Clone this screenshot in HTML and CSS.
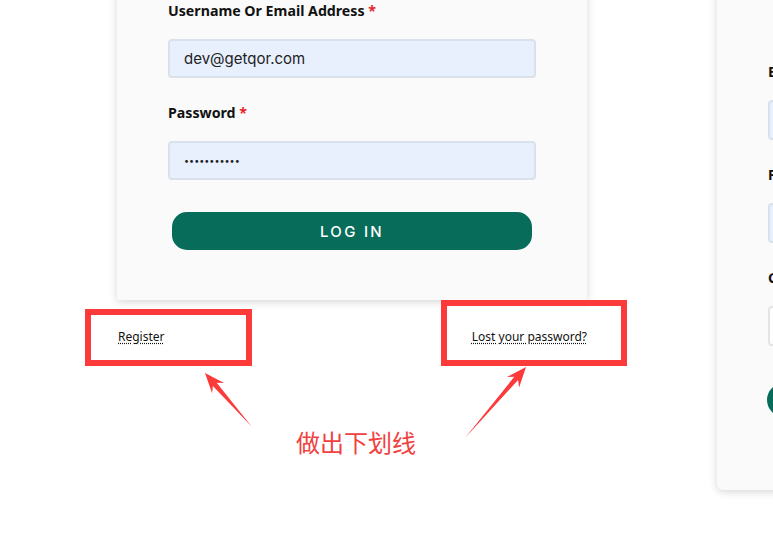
FILE: index.html
```html
<!DOCTYPE html>
<html lang="zh-CN">
<head>
  <meta charset="UTF-8">
  <title>Log In</title>
  <link rel="stylesheet" href="styles.css">
</head>
<body>
  <div class="page">
    <div class="login-col">
      <div class="card login-card">
        <form class="auth-form">
          <div class="form-row">
            <label class="field-label" for="username">Username Or Email Address <span class="req">*</span></label>
            <input class="field" type="text" id="username" value="dev@getqor.com">
          </div>
          <div class="form-row">
            <label class="field-label" for="password">Password <span class="req">*</span></label>
            <input class="field" type="password" id="password" value="12345678901">
          </div>
          <button type="button" class="btn">Log In</button>
        </form>
      </div>
      <div class="links">
        <a href="#">Register</a>
        <a href="#">Lost your password?</a>
      </div>
    </div>

    <div class="card reg-card">
      <form class="auth-form">
        <div class="form-row">
          <label class="field-label" for="regEmail">Email Address <span class="req">*</span></label>
          <input class="field" type="text" id="regEmail">
        </div>
        <div class="form-row">
          <label class="field-label" for="regPass">Password <span class="req">*</span></label>
          <input class="field" type="password" id="regPass">
        </div>
        <div class="form-row">
          <label class="field-label" for="regConfirm">Confirm Password <span class="req">*</span></label>
          <input class="field plain" type="password" id="regConfirm">
        </div>
        <button type="button" class="btn">Register</button>
      </form>
    </div>
  </div>

  <!-- annotation layer -->
  <svg class="notes" width="773" height="540" viewBox="0 0 773 540">
    <rect x="88" y="312" width="161" height="51" fill="none" stroke="#fc3a3a" stroke-width="6"/>
    <rect x="444" y="303" width="180" height="60" fill="none" stroke="#fc3a3a" stroke-width="6"/>
    <polygon fill="#fc3a3a" points="252,427 216.7,382.7 224.1,382.9 205,373 212.1,393.3 212.9,385.9"/>
    <polygon fill="#fc3a3a" points="465,438 518.1,380 519.1,387.4 526,367 506.9,377 514.3,376.8"/>
    <text x="296" y="452" class="note-text">做出下划线</text>
  </svg>
</body>
</html>
```

FILE: styles.css
```css
html, body { margin: 0; overflow: hidden; }
body {
  background: #fff;
  font-family: "Noto Sans", "Open Sans", sans-serif;
  color: #111;
  position: relative;
  width: 773px;
  height: 540px;
}
.page {
  display: flex;
  align-items: flex-start;
  gap: 130px;
  padding-left: 117px;
  margin-top: -40px;
}
.login-col { width: 470px; flex-shrink: 0; }
.card {
  background: #fafafa;
  box-shadow: 0 2px 9px rgba(0, 0, 0, 0.16);
  border-radius: 2px;
  box-sizing: border-box;
}
.login-card { padding: 40px 51px 50px 51px; }
.reg-card {
  width: 470px;
  flex-shrink: 0;
  padding: 101px 51px 73px 51px;
  border-radius: 6px;
}
.form-row { margin-bottom: 24px; }
.field-label {
  display: block;
  font-weight: 700;
  font-size: 14.2px;
  line-height: 22px;
  margin-bottom: 17px;
  color: #111;
}
.req { color: #e5262b; }
.field {
  display: block;
  width: 100%;
  box-sizing: border-box;
  height: 39px;
  padding: 0 14px;
  border: 2px solid #dbe1ea;
  border-radius: 4px;
  background: #e8f0fe;
  font-family: Inter, "Noto Sans", sans-serif;
  font-size: 15px;
  color: #222;
  outline: none;
}
.reg-card .field { height: 40px; }
.field.plain { background: #fff; border-color: #e4e4e4; }
.field[type="password"] { font-size: 9px; letter-spacing: 0; }
.form-row:last-of-type { margin-bottom: 32px; }
.btn {
  display: block;
  width: calc(100% - 8px);
  margin: 0 4px;
  height: 38px;
  border: none;
  border-radius: 15px;
  background: #076d5a;
  color: #fff;
  font-family: Inter, "Noto Sans", sans-serif;
  font-size: 15px;
  font-weight: 500;
  letter-spacing: 2.3px;
  text-transform: uppercase;
  cursor: pointer;
}
.reg-card .form-row:last-of-type { margin-bottom: 37px; }
.reg-card .btn {
  width: 100%;
  margin: 0 0 0 -1px;
  height: 34px;
  border-radius: 17px;
}
.links {
  display: flex;
  justify-content: space-between;
  padding: 28px 0 0 1px;
  font-size: 12px;
  line-height: 18px;
}
.links a {
  color: #111;
  text-decoration: underline dotted;
  text-underline-offset: 2px;
}
.notes {
  position: absolute;
  top: 0;
  left: 0;
  pointer-events: none;
}
.note-text {
  font-family: "Noto Sans CJK SC", sans-serif;
  font-size: 24px;
  fill: #f0413f;
}
```
